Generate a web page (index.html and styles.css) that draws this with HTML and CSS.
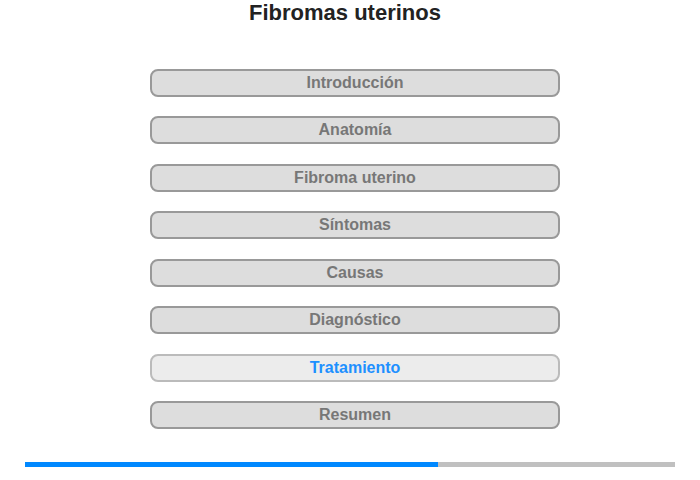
FILE: index.html
```html
<!DOCTYPE html>
<html lang="es">
<head>
<meta charset="utf-8">
<title>Fibromas uterinos</title>
<link rel="stylesheet" href="styles.css">
</head>
<body>
<div class="page">
  <h1 class="title">Fibromas uterinos</h1>
  <nav class="menu">
    <div class="item">Introducción</div>
    <div class="item">Anatomía</div>
    <div class="item">Fibroma uterino</div>
    <div class="item">Síntomas</div>
    <div class="item">Causas</div>
    <div class="item">Diagnóstico</div>
    <div class="item active">Tratamiento</div>
    <div class="item">Resumen</div>
  </nav>
  <div class="progress">
    <div class="progress-fill" style="width: 413px"></div>
  </div>
</div>
</body>
</html>
```
FILE: styles.css
```css
html, body {
  margin: 0;
  padding: 0;
  background: #ffffff;
}
.page {
  width: 700px;
  height: 480px;
  font-family: "Liberation Sans", Arial, sans-serif;
  display: flex;
  flex-direction: column;
}
.title {
  margin: 0;
  padding-top: 0;
  height: 69px;
  box-sizing: border-box;
  font-size: 22px;
  line-height: 25px;
  font-weight: bold;
  color: #222222;
  text-align: center;
  padding-right: 10px;
}
.menu {
  margin-left: 150px;
  width: 410px;
  display: flex;
  flex-direction: column;
  gap: 19.43px;
}
.item {
  height: 28px;
  box-sizing: border-box;
  border: 2px solid #999999;
  border-radius: 8px;
  background: #dddddd;
  color: #777777;
  font-size: 16px;
  font-weight: bold;
  line-height: 24px;
  text-align: center;
}
.item.active {
  background: #ececec;
  border-color: #bbbbbb;
  color: #1e90ff;
}
.progress {
  margin: 33px 0 0 25px;
  width: 650px;
  height: 5px;
  background: #c0c0c0;
  display: flex;
}
.progress-fill {
  height: 5px;
  background: #0088ff;
}
```
